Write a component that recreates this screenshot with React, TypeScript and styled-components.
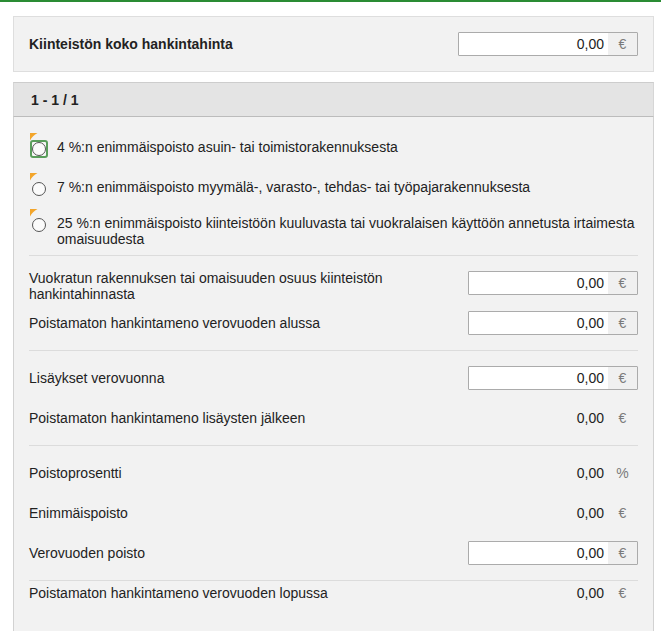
import React from "react";
import styled, { createGlobalStyle, css } from "styled-components";

const GlobalStyle = createGlobalStyle`
  html, body {
    margin: 0;
    padding: 0;
    background: #ffffff;
    font-family: "Liberation Sans", Arial, sans-serif;
    font-size: 14px;
    color: #222;
  }
`;

const TopBar = styled.div`
  height: 2px;
  background: #2a8c34;
`;

const Page = styled.div`
  width: 641px;
  margin: 14px 0 0 13px;
  display: flex;
  flex-direction: column;
`;

const TotalPanel = styled.div`
  display: flex;
  align-items: center;
  justify-content: space-between;
  background: #f2f2f2;
  border: 1px solid #dedede;
  padding: 15px;
`;

const TotalLabel = styled.div`
  font-weight: bold;
  line-height: 16px;
`;

const PagerHeader = styled.div`
  margin-top: 10px;
  display: flex;
  align-items: center;
  padding: 1px 0 0 17px;
  box-sizing: border-box;
  height: 35px;
  background: #e4e4e4;
  border-top: 1px solid #cdcdcd;
  border-bottom: 1px solid #bcbcbc;
  border-left: 1px solid #d6d6d6;
  border-right: 1px solid #d6d6d6;
  font-weight: bold;
`;

const ContentPanel = styled.div`
  background: #f2f2f2;
  border-left: 1px solid #d2d2d2;
  border-right: 1px solid #d2d2d2;
  padding: 0 15px 60px 15px;
`;

const RadioList = styled.div`
  display: flex;
  flex-direction: column;
  gap: 20px;
  padding: 22px 0 1px 0;
`;

const RadioItem = styled.label<{ $focused?: boolean }>`
  display: flex;
  align-items: flex-start;
  gap: 8px;
  line-height: 16px;
  cursor: pointer;
  ${(p) =>
    p.$focused &&
    css`
      padding-bottom: 4px;
    `}
`;

const RadioIcon = styled.span`
  position: relative;
  flex: 0 0 20px;
  width: 20px;
  height: 16px;
`;

const Circle = styled.span`
  position: absolute;
  left: 3px;
  top: 3px;
  width: 12px;
  height: 12px;
  border: 1px solid #555;
  border-radius: 50%;
  background: #fbfbfb;
`;

const FocusRing = styled.span`
  position: absolute;
  left: 1px;
  top: 1px;
  width: 14px;
  height: 14px;
  border: 2px solid #5a9e5c;
  border-radius: 3px;
  background: #f7f7f7;
`;

const Marker = styled.svg`
  position: absolute;
  left: 1px;
  top: -6px;
`;

const RadioText = styled.span`
  flex: 1;
`;

const Separator = styled.div<{ $tight?: boolean }>`
  height: 1px;
  background: #dcdcdc;
  margin: 7px 0 ${(p) => (p.$tight ? "0" : "7px")} 0;
`;

const Row = styled.div<{ $compact?: boolean }>`
  display: flex;
  align-items: center;
  justify-content: space-between;
  gap: 12px;
  box-sizing: border-box;
  height: ${(p) => (p.$compact ? "24px" : "40px")};
  padding: ${(p) => (p.$compact ? "0" : "8px 0")};
`;

const RowLabel = styled.div<{ $multiline?: boolean }>`
  flex: 1;
  line-height: 16px;
  ${(p) =>
    p.$multiline &&
    css`
      margin-top: 6px;
    `}
`;

const ValueBox = styled.div<{ $input?: boolean; $wide?: boolean }>`
  display: flex;
  align-items: stretch;
  flex: 0 0 auto;
  width: ${(p) => (p.$wide ? "180px" : "170px")};
  height: 24px;
  box-sizing: border-box;
  border: 1px solid ${(p) => (p.$input ? "#ababab" : "transparent")};
  border-radius: 1px;
`;

const ValueText = styled.div<{ $input?: boolean }>`
  flex: 1;
  display: flex;
  align-items: center;
  justify-content: flex-end;
  padding-right: 4px;
  background: ${(p) => (p.$input ? "#ffffff" : "transparent")};
  color: #222;
`;

const Unit = styled.div<{ $input?: boolean }>`
  width: 29px;
  display: flex;
  align-items: center;
  justify-content: center;
  background: ${(p) => (p.$input ? "#f0f0f0" : "transparent")};
  color: #7a7a7a;
`;

function Value({ input, wide, unit = "€" }: { input?: boolean; wide?: boolean; unit?: string }) {
  return (
    <ValueBox $input={input} $wide={wide}>
      <ValueText $input={input}>0,00</ValueText>
      <Unit $input={input}>{unit}</Unit>
    </ValueBox>
  );
}

function Radio({ focused, children }: { focused?: boolean; children: React.ReactNode }) {
  return (
    <RadioItem $focused={focused}>
      <RadioIcon>
        {focused && <FocusRing />}
        <Circle />
        <Marker width="8" height="8" viewBox="0 0 8 8">
          <path d="M0 0 H7.5 Q2.5 2.5 0 7.5 Z" fill="#f3a52a" />
        </Marker>
      </RadioIcon>
      <RadioText>{children}</RadioText>
    </RadioItem>
  );
}

export default function App() {
  return (
    <>
      <GlobalStyle />
      <TopBar />
      <Page>
        <TotalPanel>
          <TotalLabel>Kiinteistön koko hankintahinta</TotalLabel>
          <Value input wide />
        </TotalPanel>
        <PagerHeader>1 - 1 / 1</PagerHeader>
        <ContentPanel>
          <RadioList>
            <Radio focused>4 %:n enimmäispoisto asuin- tai toimistorakennuksesta</Radio>
            <Radio>7 %:n enimmäispoisto myymälä-, varasto-, tehdas- tai työpajarakennuksesta</Radio>
            <Radio>
              25 %:n enimmäispoisto kiinteistöön kuuluvasta tai vuokralaisen käyttöön annetusta irtaimesta
              omaisuudesta
            </Radio>
          </RadioList>
          <Separator />
          <Row>
            <RowLabel $multiline>Vuokratun rakennuksen tai omaisuuden osuus kiinteistön hankintahinnasta</RowLabel>
            <Value input />
          </Row>
          <Row>
            <RowLabel>Poistamaton hankintameno verovuoden alussa</RowLabel>
            <Value input />
          </Row>
          <Separator />
          <Row>
            <RowLabel>Lisäykset verovuonna</RowLabel>
            <Value input />
          </Row>
          <Row>
            <RowLabel>Poistamaton hankintameno lisäysten jälkeen</RowLabel>
            <Value />
          </Row>
          <Separator />
          <Row>
            <RowLabel>Poistoprosentti</RowLabel>
            <Value unit="%" />
          </Row>
          <Row>
            <RowLabel>Enimmäispoisto</RowLabel>
            <Value />
          </Row>
          <Row>
            <RowLabel>Verovuoden poisto</RowLabel>
            <Value input />
          </Row>
          <Separator $tight />
          <Row $compact>
            <RowLabel>Poistamaton hankintameno verovuoden lopussa</RowLabel>
            <Value />
          </Row>
        </ContentPanel>
      </Page>
    </>
  );
}
